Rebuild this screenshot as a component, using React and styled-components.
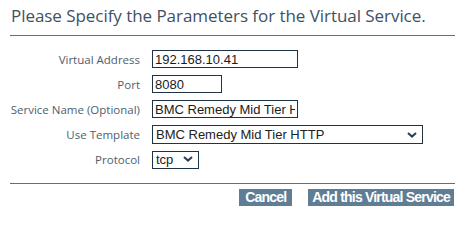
import React from "react";
import styled, { createGlobalStyle } from "styled-components";

const Global = createGlobalStyle`
  html, body { margin: 0; padding: 0; background: #fff; }
  body { width: 464px; height: 212px; overflow: hidden; }
`;

const Panel = styled.div`
  display: flex;
  flex-direction: column;
  padding: 4px 9px 0 10px;
`;

const Title = styled.h1`
  margin: 0 0 8px 1px;
  font-family: "Open Sans", sans-serif;
  font-weight: 400;
  font-size: 17px;
  letter-spacing: -0.05px;
  line-height: 23px;
  color: #3f5064;
  white-space: nowrap;
`;

const Rule = styled.hr`
  margin: 0;
  border: none;
  height: 1px;
  background: #55728b;
`;

const Form = styled.div`
  display: grid;
  grid-template-columns: 130px auto;
  grid-auto-rows: 19px;
  column-gap: 12px;
  row-gap: 6px;
  align-items: start;
  margin: 14px 0 14px;
`;

const Label = styled.label`
  justify-self: end;
  align-self: center;
  font-family: "Open Sans", sans-serif;
  font-size: 11.5px;
  line-height: 18px;
  color: #4e5e6e;
  white-space: nowrap;
`;

const Field = styled.input`
  box-sizing: border-box;
  width: ${(p) => p.$w}px;
  height: 18px;
  margin: 0;
  padding: 0 2px;
  border: 1px solid #1f3347;
  border-radius: 0;
  font-family: "Liberation Sans", Arial, sans-serif;
  font-size: 13px;
  color: #1b1b1b;
  background: #fff;
  outline: none;
`;

const SelectWrap = styled.div`
  position: relative;
  width: ${(p) => p.$w}px;
  height: ${(p) => p.$h}px;
`;

const Select = styled.select`
  box-sizing: border-box;
  width: 100%;
  height: 100%;
  margin: 0;
  padding: 0 0 0 3px;
  appearance: none;
  -webkit-appearance: none;
  border: 1px solid #1f3347;
  border-radius: 0;
  font-family: "Liberation Sans", Arial, sans-serif;
  font-size: 13px;
  color: #222;
  background: #fff;
  outline: none;
`;

const Chevron = styled.svg`
  position: absolute;
  right: 6px;
  top: 50%;
  margin-top: -3px;
  pointer-events: none;
`;

const Actions = styled.div`
  display: flex;
  justify-content: flex-end;
  gap: 16px;
  margin-top: 5px;
  padding-right: 1px;
`;

const Button = styled.button`
  height: 17px;
  margin: 0;
  padding: 0 ${(p) => p.$pad}px;
  border: none;
  border-radius: 0;
  background: #5f7d95;
  color: #fff;
  font-family: "Liberation Sans", Arial, sans-serif;
  font-weight: 700;
  font-size: 14px;
  letter-spacing: -0.8px;
  line-height: 17px;
  cursor: pointer;
`;

const Arrow = () => (
  <Chevron width="10" height="6" viewBox="0 0 10 6">
    <path d="M1 1 L5 4.6 L9 1" fill="none" stroke="#2c3e50" strokeWidth="2" />
  </Chevron>
);

export default function App() {
  return (
    <>
      <Global />
      <Panel>
        <Title>Please Specify the Parameters for the Virtual Service.</Title>
        <Rule />
        <Form>
          <Label>Virtual Address</Label>
          <Field $w={146} defaultValue="192.168.10.41" />
          <Label>Port</Label>
          <Field $w={70} defaultValue="8080" />
          <Label>Service Name (Optional)</Label>
          <Field $w={146} defaultValue="BMC Remedy Mid Tier HTTP" />
          <Label>Use Template</Label>
          <SelectWrap $w={271} $h={19}>
            <Select defaultValue="bmc">
              <option value="bmc">BMC Remedy Mid Tier HTTP</option>
            </Select>
            <Arrow />
          </SelectWrap>
          <Label>Protocol</Label>
          <SelectWrap $w={47} $h={18}>
            <Select defaultValue="tcp">
              <option value="tcp">tcp</option>
              <option value="udp">udp</option>
            </Select>
            <Arrow />
          </SelectWrap>
        </Form>
        <Rule />
        <Actions>
          <Button $pad={6}>Cancel</Button>
          <Button $pad={4}>Add this Virtual Service</Button>
        </Actions>
      </Panel>
    </>
  );
}
